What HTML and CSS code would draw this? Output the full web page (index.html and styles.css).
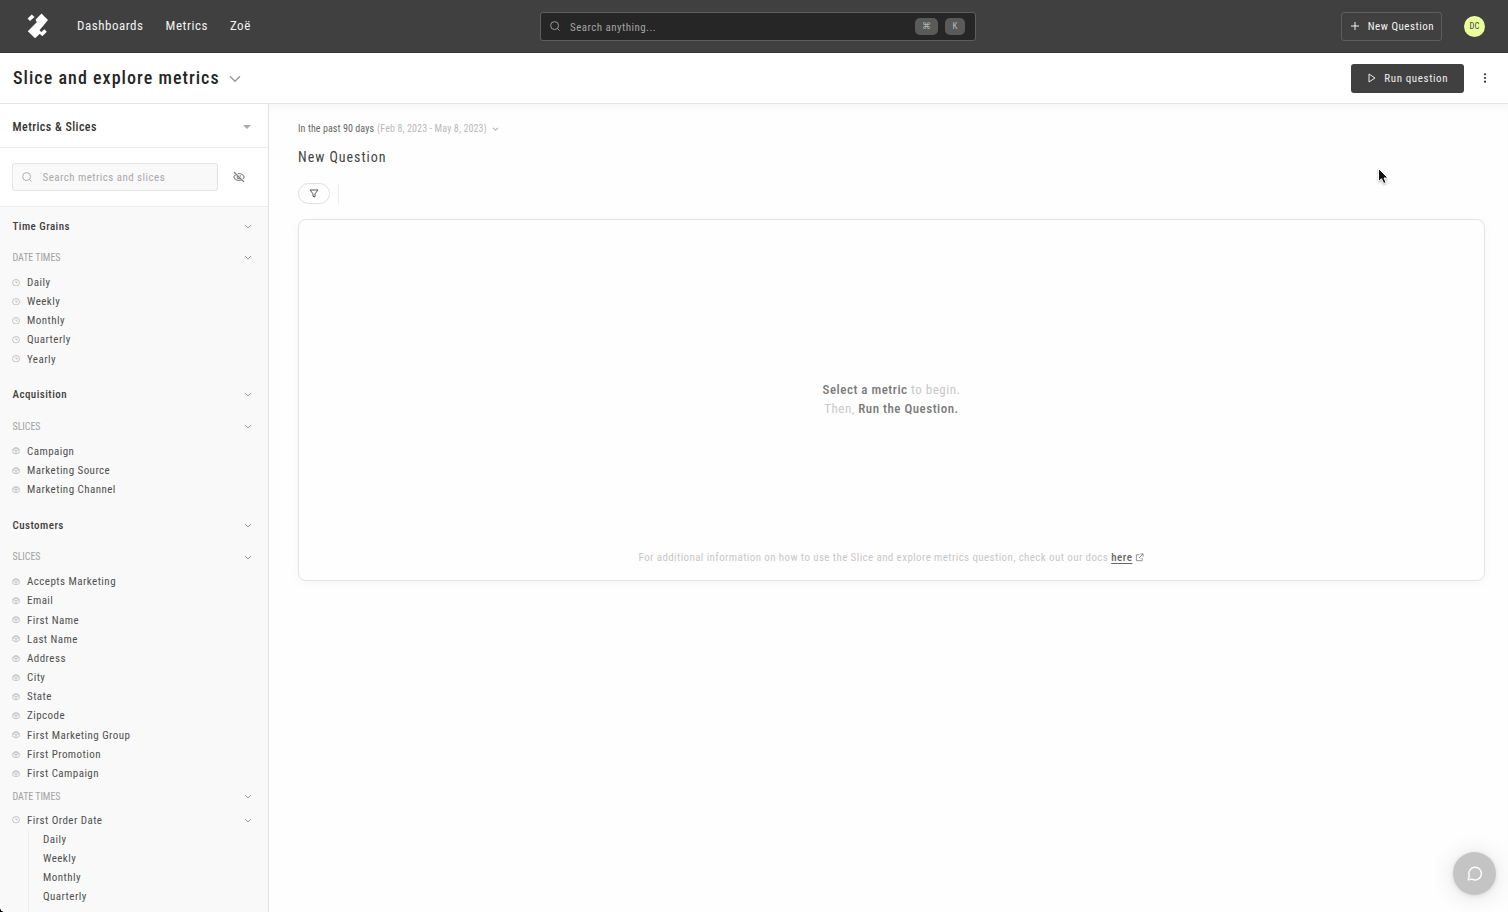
FILE: index.html
```
<!DOCTYPE html>
<html lang="en">
<head>
<meta charset="utf-8">
<title>Slice and explore metrics</title>
<link rel="stylesheet" href="styles.css">
</head>
<body>
<svg class="defs" width="0" height="0">
  <symbol id="chev" viewBox="0 0 8 5"><path d="M1 1l3 3 3-3"/></symbol>
  <symbol id="clock" viewBox="0 0 24 24" preserveAspectRatio="none"><circle cx="12" cy="12" r="10.500"/><path d="M12 6v6.500h5"/></symbol>
  <symbol id="cube" viewBox="0 0 24 24" preserveAspectRatio="none"><path d="M12 1.500l9.500 5v11l-9.500 5-9.500-5v-11zM4 8l8 4.500 8-4.500M12 12v10M7.500 4l4.500 2.500 4.500-2.500"/></symbol>
  <symbol id="search" viewBox="0 0 24 24"><circle cx="11" cy="11" r="9.500"/><path d="M18 18l5 5"/></symbol>
</svg>
<div class="app">
  <header class="topbar">
    <svg class="logo" viewBox="0 0 22 26"><path d="M14.500 .5l6.500 6.500-8.500 10.200 2 2L8 25.200 .8 18.200 9.700 9.200 8.700 6.500zM4.800 1.500L7.500 4 3 8 .6 5.600zM17.300 16.200l2.500 2.500-4.500 4.600-2.600-2.600z"/></svg>
    <nav class="nav"><a>Dashboards</a><a>Metrics</a><a>Zoë</a></nav>
    <div class="search">
      <svg class="ico"><use href="#search"/></svg>
      <span class="search-text">Search anything...</span>
      <kbd class="cmd">⌘</kbd><kbd>K</kbd>
    </div>
    <button class="new"><svg viewBox="0 0 8 8"><path d="M4 0v8M0 4h8"/></svg><span>New Question</span></button>
    <div class="avatar">DC</div>
  </header>
  <div class="titlebar">
    <h1>Slice and explore metrics</h1>
    <svg class="title-chev" viewBox="0 0 12 8"><path d="M1 1.200l5 5 5-5"/></svg>
    <button class="run"><svg viewBox="0 0 8 10"><path d="M1 1v8l6-4z"/></svg><span>Run question</span></button>
    <svg class="dots" viewBox="0 0 4 10"><circle cx="2" cy="1.300" r="1.100"/><circle cx="2" cy="5" r="1.100"/><circle cx="2" cy="8.700" r="1.100"/></svg>
  </div>
  <div class="body">
    <aside class="side">
      <div class="side-head"><span>Metrics &amp; Slices</span><svg viewBox="0 0 8 4"><path d="M0 0h8L4 4z"/></svg></div>
      <div class="side-search">
        <div class="field"><svg class="ico"><use href="#search"/></svg><span>Search metrics and slices</span></div>
        <svg class="eye" viewBox="0 0 24 24"><path d="M2 2l20 20M6.700 6.700C4 8 2.500 10 1.500 12c2 4 5.500 7 10.500 7 2 0 3.800-.5 5.300-1.300M10 5.200c.7-.1 1.300-.2 2-.2 5 0 8.500 3 10.500 7-.6 1.200-1.400 2.400-2.500 3.500M9.500 9.500a3.500 3.500 0 0 0 5 5M13.500 8.800a3.500 3.500 0 0 1 2 2.200"/></svg>
      </div>
      <div class="list">
        <section>
          <h2>Time Grains<svg class="chev"><use href="#chev"/></svg></h2>
          <h3>DATE TIMES<svg class="chev"><use href="#chev"/></svg></h3>
          <ul>
            <li><svg class="mark"><use href="#clock"/></svg>Daily</li>
            <li><svg class="mark"><use href="#clock"/></svg>Weekly</li>
            <li><svg class="mark"><use href="#clock"/></svg>Monthly</li>
            <li><svg class="mark"><use href="#clock"/></svg>Quarterly</li>
            <li><svg class="mark"><use href="#clock"/></svg>Yearly</li>
          </ul>
        </section>
        <section>
          <h2>Acquisition<svg class="chev"><use href="#chev"/></svg></h2>
          <h3>SLICES<svg class="chev"><use href="#chev"/></svg></h3>
          <ul>
            <li><svg class="mark"><use href="#cube"/></svg>Campaign</li>
            <li><svg class="mark"><use href="#cube"/></svg>Marketing Source</li>
            <li><svg class="mark"><use href="#cube"/></svg>Marketing Channel</li>
          </ul>
        </section>
        <section>
          <h2>Customers<svg class="chev"><use href="#chev"/></svg></h2>
          <h3>SLICES<svg class="chev"><use href="#chev"/></svg></h3>
          <ul>
            <li><svg class="mark"><use href="#cube"/></svg>Accepts Marketing</li>
            <li><svg class="mark"><use href="#cube"/></svg>Email</li>
            <li><svg class="mark"><use href="#cube"/></svg>First Name</li>
            <li><svg class="mark"><use href="#cube"/></svg>Last Name</li>
            <li><svg class="mark"><use href="#cube"/></svg>Address</li>
            <li><svg class="mark"><use href="#cube"/></svg>City</li>
            <li><svg class="mark"><use href="#cube"/></svg>State</li>
            <li><svg class="mark"><use href="#cube"/></svg>Zipcode</li>
            <li><svg class="mark"><use href="#cube"/></svg>First Marketing Group</li>
            <li><svg class="mark"><use href="#cube"/></svg>First Promotion</li>
            <li><svg class="mark"><use href="#cube"/></svg>First Campaign</li>
          </ul>
          <h3 class="second">DATE TIMES<svg class="chev"><use href="#chev"/></svg></h3>
          <ul>
            <li class="parent"><svg class="mark"><use href="#clock"/></svg>First Order Date<svg class="chev"><use href="#chev"/></svg></li>
          </ul>
          <ul class="nested">
            <li>Daily</li>
            <li>Weekly</li>
            <li>Monthly</li>
            <li>Quarterly</li>
          </ul>
        </section>
      </div>
    </aside>
    <main class="main">
      <div class="range"><span>In the past 90 days</span><em>(Feb 8, 2023 - May 8, 2023)</em><svg class="chev"><use href="#chev"/></svg></div>
      <div class="question">New Question</div>
      <div class="filters"><div class="pill"><svg viewBox="0 0 10 9"><path d="M1 1h8L6 4.800V8L4 7.200V4.800z"/></svg></div><i></i></div>
      <div class="card">
        <div class="empty"><p><b>Select a metric</b> to begin.</p><p>Then, <b>Run the Question.</b></p></div>
        <div class="docs"><span>For additional information on how to use the Slice and explore metrics question, check out our docs</span><a>here</a><svg viewBox="0 0 10 10"><path d="M5 2H1.500v6.500H8V5.500M6 1h3v3M9 1L4.500 5.500"/></svg></div>
      </div>
    </main>
  </div>
</div>
<div class="chat"><svg viewBox="0 0 24 24"><path d="M3 21l1.500-5.500A9 9 0 1 1 8.500 20z"/></svg></div>
<svg class="cursor" viewBox="0 0 12 18"><path d="M1.500 1.500v13l3-2.700 2.200 4.700 2.400-1-2.100-4.500h4z"/></svg>
<div class="corner"></div>
</body>
</html>
```
FILE: styles.css
```
* { box-sizing: border-box; margin: 0; padding: 0; }
body { width: 1508px; height: 912px; overflow: hidden; background: #fefefe; font: 400 11px/1 "Roboto Condensed", Roboto, "Liberation Sans", sans-serif; letter-spacing: .45px; color: #4a4a4a; }
svg { display: block; flex: none; fill: none; stroke: currentColor; }
.defs { position: absolute; }
button { font: inherit; letter-spacing: inherit; color: inherit; background: none; border: 0; }
ul { list-style: none; }
.app { display: flex; flex-direction: column; height: 912px; }

.topbar { display: flex; align-items: center; height: 53px; flex: none; background: #404040; border-bottom: 1px solid #343434; padding: 0 23px 0 27px; color: #f2f2f2; }
.logo { width: 22px; height: 26px; fill: #fff; stroke: none; }
.nav { display: flex; gap: 22px; margin-left: 28px; width: 463px; font-size: 13px; letter-spacing: .53px; padding-bottom: 2px; }
.search { display: flex; align-items: center; width: 436px; height: 29px; border: 1px solid #5e5e5e; border-radius: 3px; background: #262626; padding: 0 10px 0 8.500px; color: #a3a3a3; }
.ico { width: 10px; height: 10px; stroke-width: 2.200; }
.search-text { margin-left: 10.500px; flex: 1; padding-top: 2px; }
kbd { width: 20px; height: 17px; border-radius: 5px; background: #5a5a5a; color: #b5b5b5; font: 9px/17px "Roboto Condensed", Roboto, "DejaVu Sans", sans-serif; letter-spacing: 0; text-align: center; }
kbd.cmd { width: 23px; margin-right: 7px; font-size: 9px; }
.new { display: flex; align-items: center; justify-content: center; gap: 9px; width: 101px; height: 29px; margin-left: auto; padding-left: 2px; border: 1px solid #5e5e5e; border-radius: 3px; letter-spacing: .5px; }
.new svg { width: 8px; height: 8px; }
.avatar { width: 21px; height: 21px; margin-left: 22px; border-radius: 50%; background: #eaff9c; color: #444; font-size: 8.500px; letter-spacing: .1px; line-height: 21px; text-align: center; }

.titlebar { display: flex; align-items: center; height: 51px; flex: none; background: #fff; border-bottom: 1px solid #e3e3e3; padding: 0 21px 0 13px; }
h1 { font-size: 18px; font-weight: 500; letter-spacing: 1.040px; color: #262626; }
.title-chev { width: 12px; height: 8px; margin: 2px 0 0 9.500px; color: #9a9a9a; stroke-width: 1.400; }
.run { display: flex; align-items: center; justify-content: center; gap: 8.500px; width: 113px; height: 29px; margin-left: auto; padding-left: 1px; border-radius: 3px; background: #404040; color: #eee; letter-spacing: .6px; }
.run svg { width: 8px; height: 10px; }
.dots { width: 4px; height: 10px; margin-left: 19px; fill: #333; stroke: none; }

.body { display: flex; flex: 1; min-height: 0; }
.side { display: flex; flex-direction: column; width: 269px; flex: none; border-right: 1px solid #e3e3e3; background: #fff; }
.side-head { display: flex; align-items: center; justify-content: space-between; height: 44px; padding: 3px 17px 0 12.500px; flex: none; border-bottom: 1px solid #ebebeb; font-size: 12px; font-weight: 500; letter-spacing: .45px; color: #333; }
.side-head svg { width: 8px; height: 4px; fill: #aaa; stroke: none; }
.side-search { display: flex; align-items: center; height: 59px; flex: none; padding: 0 0 0 12px; border-bottom: 1px solid #ebebeb; }
.field { display: flex; align-items: center; width: 206px; height: 28px; border: 1px solid #e4e4e4; border-radius: 3px; background: #f9f9f9; padding-left: 8.500px; color: #a9a9a9; }
.field span { margin-left: 11px; }
.eye { width: 12px; height: 12px; margin-left: 15px; color: #858585; stroke-width: 2.200; }
.list { flex: 1; overflow: hidden; background: #f9f9f9; padding-top: 3px; }
section { padding-bottom: 10.200px; }
h2, h3 { display: flex; align-items: center; justify-content: space-between; padding: 0 16px 0 12.500px; }
h2 { height: 32px; font-size: 11px; font-weight: 500; letter-spacing: .45px; color: #404040; }
h3 { height: 30.800px; font-size: 10px; font-weight: 400; letter-spacing: -.05px; color: #a2a2a2; padding-top: 1px; }
h3.second { height: 27.500px; padding-top: 0; }
.chev { width: 8px; height: 5px; color: #999; }
li { display: flex; align-items: center; height: 19.180px; padding-left: 12px; color: #505050; }
.mark { width: 8px; height: 7.500px; margin-right: 7px; color: #aaa; stroke-width: 2; }
.parent { padding-right: 16px; }
.parent .chev { margin-left: auto; }
.nested { margin-left: 28px; border-left: 1px solid #eee; padding-bottom: 20px; }
.nested li { padding-left: 14px; }

.main { flex: 1; padding: 18px 23px 0 29px; box-shadow: inset 0 6px 10px -4px rgba(0,0,0,.04); }
.range { display: flex; align-items: center; height: 13px; font-size: 10px; letter-spacing: .08px; color: #666; }
.range em { font-style: normal; margin-left: 3px; color: #b9b9b9; letter-spacing: .12px; }
.range .chev { margin-left: 5px; width: 7px; color: #777; padding-top: 1px; }
.question { margin-top: 13px; height: 18px; line-height: 18px; font-size: 14px; letter-spacing: .97px; color: #444; }
.filters { display: flex; align-items: center; gap: 8px; margin-top: 17px; height: 21px; }
.pill { display: flex; align-items: center; justify-content: center; width: 32px; height: 21px; border: 1px solid #e0e0e0; border-radius: 11px; background: #fff; }
.pill svg { width: 10px; height: 9px; color: #555; }
.filters i { width: 1px; height: 20px; background: #eee; }
.card { display: flex; flex-direction: column; margin-top: 15px; height: 362px; border: 1px solid #e4e4e4; border-radius: 8px; background: #fefefe; box-shadow: 0 2px 10px rgba(0,0,0,.04); }
.empty { margin-top: 160px; text-align: center; font-size: 13px; line-height: 19px; letter-spacing: .5px; color: #c8c8c8; }
.empty b { font-weight: 500; color: #7a7a7a; }
.docs { display: flex; align-items: center; justify-content: center; margin-top: 132px; height: 14px; color: #c8c8c8; letter-spacing: .39px; }
.docs a { margin-left: 3px; color: #666; font-weight: 500; letter-spacing: .5px; text-decoration: underline; text-underline-offset: 2px; }
.docs svg { width: 9px; height: 9px; margin-left: 3px; color: #888; }

.chat { position: absolute; left: 1453px; top: 852px; display: flex; align-items: center; justify-content: center; width: 43px; height: 43px; border-radius: 50%; background: #c4c4c4; box-shadow: 0 2px 24px rgba(0,0,0,.12), 0 1px 4px rgba(0,0,0,.1); color: #fff; }
.chat svg { width: 17px; height: 17px; stroke-width: 2; stroke-linejoin: round; }
.cursor { position: absolute; left: 1377px; top: 167px; width: 12px; height: 18px; fill: #111; stroke: #fff; filter: drop-shadow(0 1px 1px rgba(0,0,0,.3)); }
.corner { position: absolute; left: 0; bottom: 0; width: 4px; height: 4px; background: radial-gradient(circle at 100% 0, transparent 3.500px, #000 4px); }
```
